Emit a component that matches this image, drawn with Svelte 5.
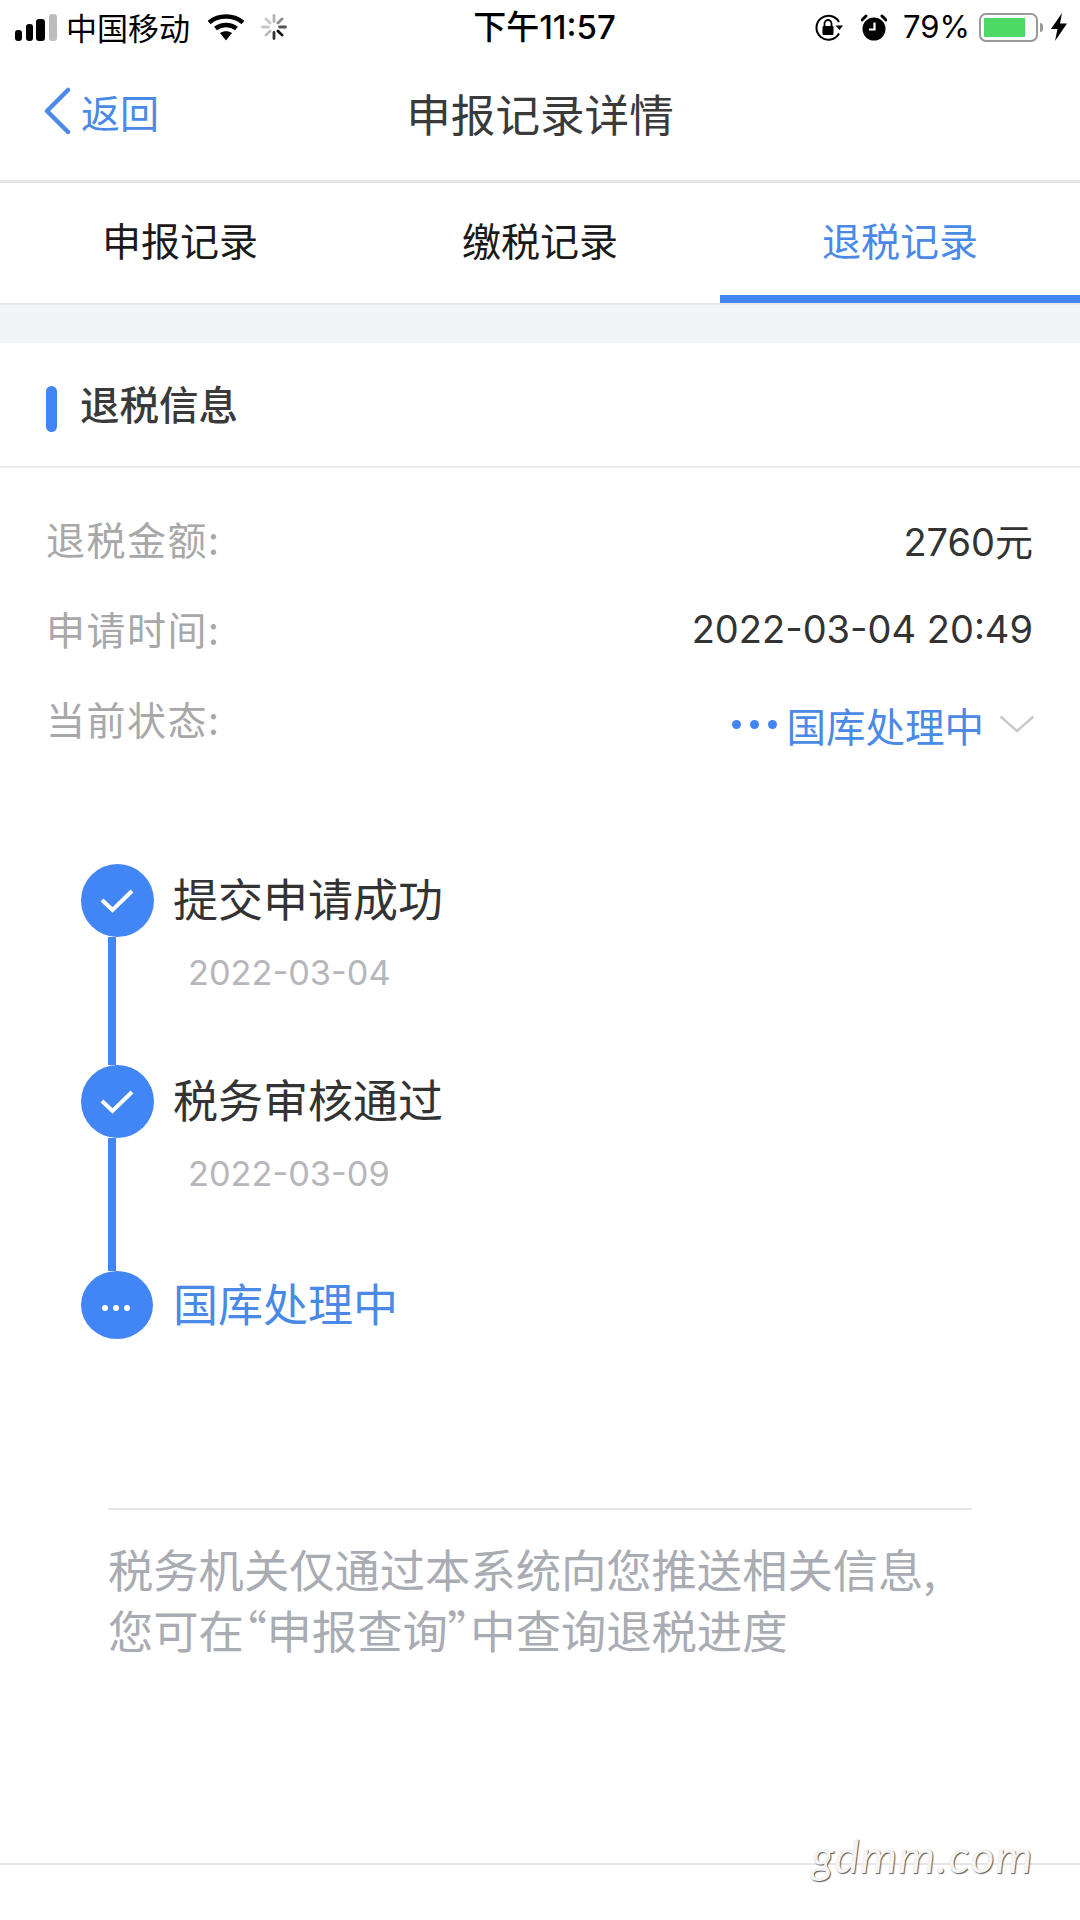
<script>
  const rows = [
    { label: '退税金额:', value: '2760元' },
    { label: '申请时间:', value: '2022-03-04 20:49' }
  ];
  const steps = [
    { title: '提交申请成功', date: '2022-03-04' },
    { title: '税务审核通过', date: '2022-03-09' }
  ];
  const spokes = [0, 45, 90, 135, 180, 225, 270, 315];
  const spokeGrey = ['#b5b5b5', '#8a8a8a', '#555', '#111', '#333', '#bbb', '#c4c4c4', '#c8c8c8'];
</script>

<div class="page">
  <header class="status">
    <div class="status-left">
      <svg class="signal" width="42" height="27" viewBox="0 0 42 27">
        <rect x="0" y="16" width="7" height="11" rx="3" fill="#000" />
        <rect x="11" y="10" width="7" height="17" rx="3" fill="#000" />
        <rect x="21" y="5" width="9" height="22" rx="3" fill="#000" />
        <rect x="34" y="0" width="8" height="27" rx="3" fill="#bdbdbd" />
      </svg>
      <span class="carrier">中国移动</span>
      <svg class="wifi" width="36" height="27" viewBox="0 0 36 27">
        <path d="M1 8.500C10.500 .5 25.500 .5 35 8.500" fill="none" stroke="#000" stroke-width="4.500" />
        <path d="M7.500 14.500C13.500 9.800 22.500 9.800 28.500 14.500" fill="none" stroke="#000" stroke-width="4.500" />
        <path d="M12 19C15.500 16.500 20.500 16.500 24 19L18 26.500Z" fill="#000" />
      </svg>
      <svg class="spinner" width="26" height="26" viewBox="0 0 26 26">
        {#each spokes as deg, i}
          <line x1="13" y1="1.500" x2="13" y2="7.500" stroke={spokeGrey[i]} stroke-width="2.800" stroke-linecap="round" transform="rotate({deg} 13 13)" />
        {/each}
      </svg>
    </div>
    <div class="time">下午11:57</div>
    <div class="status-right">
      <svg width="30" height="27" viewBox="0 0 29 27">
        <path d="M24.500 8A12 12 0 1 0 24.500 19.500" fill="none" stroke="#000" stroke-width="2" />
        <path d="M21 11.500L28.500 11.500L25 16Z" fill="#000" />
        <rect x="8" y="12" width="11" height="9" rx="1" fill="#000" />
        <path d="M10 12V9.500a3.500 3.500 0 0 1 7 0V12" fill="none" stroke="#000" stroke-width="1.800" />
      </svg>
      <svg class="alarm" width="26" height="27" viewBox="0 0 26 27">
        <circle cx="13" cy="15" r="11.500" fill="#000" />
        <path d="M1 6L5 2M25 6L21 2" stroke="#000" stroke-width="3" stroke-linecap="round" />
        <path d="M13.500 8.500V15.500H8" fill="none" stroke="#fff" stroke-width="2.200" />
      </svg>
      <span class="battery-pct">79%</span>
      <div class="battery"><div class="battery-fill"></div></div>
      <div class="battery-nib"></div>
      <svg class="bolt" width="16" height="28" viewBox="0 0 16 28">
        <path d="M11 0L0 16H6.500L4 28L16 10.500H9Z" fill="#000" />
      </svg>
    </div>
  </header>

  <nav class="nav">
    <div class="back">
      <svg width="28" height="48" viewBox="0 0 28 48">
        <path d="M25 3L4 24L25 45" fill="none" stroke="#4a8ae6" stroke-width="4.500" stroke-linecap="round" stroke-linejoin="round" />
      </svg>
      <span>返回</span>
    </div>
    <h1>申报记录详情</h1>
  </nav>

  <div class="tabs">
    <div class="tab">申报记录</div>
    <div class="tab">缴税记录</div>
    <div class="tab active">退税记录</div>
  </div>

  <div class="gap"></div>

  <div class="section-head">
    <i class="marker"></i>
    <span>退税信息</span>
  </div>

  <section class="details">
    {#each rows as row}
      <div class="row">
        <span class="label">{row.label}</span>
        <span class="value">{row.value}</span>
      </div>
    {/each}
    <div class="row">
      <span class="label">当前状态:</span>
      <span class="value status-value">
        <span class="dots"><i></i><i></i><i></i></span>
        <span class="status-text">国库处理中</span>
        <svg width="36" height="18" viewBox="0 0 36 18">
          <path d="M1.500 1.500L18 16L34.500 1.500" fill="none" stroke="#c9c9c9" stroke-width="2.500" />
        </svg>
      </span>
    </div>
  </section>

  <section class="timeline">
    {#each steps as step, i}
      <div class="step" class:second={i === 1}>
        <div class="rail">
          <div class="dot">
            <svg width="34" height="24" viewBox="0 0 34 24">
              <path d="M2 11L12.500 21L32 2" fill="none" stroke="#fff" stroke-width="4" />
            </svg>
          </div>
          <div class="connector"></div>
        </div>
        <div class="step-body">
          <div class="step-title">{step.title}</div>
          <div class="step-date">{step.date}</div>
        </div>
      </div>
    {/each}
    <div class="step last">
      <div class="rail">
        <div class="dot small">
          <span class="dots white"><i></i><i></i><i></i></span>
        </div>
      </div>
      <div class="step-body">
        <div class="step-title current">国库处理中</div>
      </div>
    </div>
  </section>

  <footer class="note">
    <p>税务机关仅通过本系统向您推送相关信息,</p>
    <p>您可在“申报查询”中查询退税进度</p>
  </footer>

  <div class="bottom-line"></div>
  <div class="watermark">gdmm.com</div>
</div>

<style>
  :global(body) {
    margin: 0;
    background: #fff;
  }

  .page {
    position: relative;
    width: 1080px;
    height: 1920px;
    overflow: hidden;
    background: #fff;
    font-family: "Noto Sans CJK SC", sans-serif;
    color: #333;
  }

  .status {
    display: grid;
    grid-template-columns: 1fr auto 1fr;
    align-items: center;
    height: 54px;
    color: #000;
  }

  .status-left {
    display: flex;
    align-items: center;
    padding-left: 15px;
  }

  .carrier {
    margin-left: 9px;
    font-size: 31px;
    line-height: 40px;
  }

  .wifi {
    margin-left: 18px;
  }

  .spinner {
    margin-left: 17px;
  }

  .time {
    font-family: "Inter", "Noto Sans CJK SC", sans-serif;
    font-size: 33px;
    font-weight: 500;
    line-height: 40px;
    padding-left: 9px;
  }

  .status-right {
    display: flex;
    align-items: center;
    justify-content: flex-end;
    padding-right: 13px;
  }

  .alarm {
    margin-left: 17px;
  }

  .battery-pct {
    margin-left: 16px;
    font-family: "Inter", sans-serif;
    font-size: 31px;
    line-height: 40px;
  }

  .battery {
    box-sizing: border-box;
    width: 59px;
    height: 29px;
    margin-left: 9px;
    padding: 3px;
    border: 2.500px solid #999;
    border-radius: 7px;
  }

  .battery-fill {
    width: 41px;
    height: 100%;
    background: #4cd964;
  }

  .battery-nib {
    width: 3px;
    height: 9px;
    margin-left: 2px;
    border-radius: 0 3px 3px 0;
    background: #999;
  }

  .bolt {
    margin-left: 8px;
  }

  .nav {
    position: relative;
    display: flex;
    align-items: center;
    justify-content: center;
    box-sizing: border-box;
    height: 129px;
    border-bottom: 3px solid #e6e6e6;
  }

  .back {
    position: absolute;
    left: 43px;
    top: 33px;
    display: flex;
    align-items: center;
    gap: 10px;
    color: #4a8ae6;
    font-size: 39px;
    line-height: 48px;
  }

  h1 {
    margin: 0 0 9px;
    font-size: 44.600px;
    font-weight: 400;
    line-height: 60px;
    color: #3a3a3a;
  }

  .tabs {
    display: grid;
    grid-template-columns: repeat(3, 1fr);
    height: 120px;
    border-bottom: 2px solid #e8e8ea;
  }

  .tab {
    display: flex;
    align-items: center;
    justify-content: center;
    box-sizing: border-box;
    padding-bottom: 9px;
    font-size: 39px;
    color: #1a1a1a;
  }

  .tab.active {
    padding-bottom: 1px;
    border-bottom: 8px solid #4285f4;
    color: #4a8ae6;
  }

  .gap {
    height: 38px;
    background: #f3f4f8;
  }

  .section-head {
    display: flex;
    align-items: center;
    gap: 23px;
    box-sizing: border-box;
    height: 125px;
    padding: 0 0 5px 46px;
    border-bottom: 2px solid #ebebeb;
    font-size: 39.500px;
    font-weight: 500;
    color: #3a3a3a;
  }

  .marker {
    display: block;
    width: 11px;
    height: 46px;
    margin-top: 14px;
    border-radius: 6px;
    background: #4285f4;
  }

  .details {
    padding: 25px 47px 0 46px;
  }

  .row {
    display: flex;
    justify-content: space-between;
    align-items: center;
    height: 90px;
  }

  .label {
    font-size: 39px;
    letter-spacing: 1.500px;
    color: #a8a8a8;
  }

  .value {
    padding-top: 2px;
    font-family: "Inter", "Noto Sans CJK SC", sans-serif;
    font-size: 38px;
    color: #333;
  }

  .status-value {
    display: flex;
    align-items: center;
    margin-right: -2px;
    padding-top: 12px;
  }

  .dots {
    display: flex;
    gap: 9px;
    margin-right: 10px;
  }

  .dots i {
    display: block;
    width: 9px;
    height: 9px;
    border-radius: 50%;
    background: #4285f4;
  }

  .status-text {
    margin-right: 15px;
    font-family: "Noto Sans CJK SC", sans-serif;
    font-size: 39.500px;
    color: #4a8ae6;
  }

  .timeline {
    margin-top: 101px;
    padding-left: 81px;
  }

  .step {
    display: flex;
  }

  .rail {
    display: flex;
    flex-direction: column;
    width: 73px;
  }

  .dot {
    display: flex;
    align-items: center;
    justify-content: center;
    flex: none;
    width: 73px;
    height: 73px;
    border-radius: 50%;
    background: #4285f4;
  }

  .dot.small {
    width: 72px;
    height: 68px;
  }

  .dot svg {
    margin-right: 2px;
  }

  .connector {
    flex: 1;
    width: 8px;
    margin-left: 27px;
    background: #4285f4;
  }

  .step-body {
    margin-left: 19px;
    padding-bottom: 68px;
  }

  .step.second .step-body {
    padding-bottom: 73px;
  }

  .step.last .step-body {
    padding-bottom: 0;
  }

  .step-title {
    font-size: 45px;
    line-height: 68px;
    color: #333;
  }

  .step-title.current {
    line-height: 63px;
    color: #4a8ae6;
  }

  .step-date {
    margin: 17px 0 0 15px;
    font-family: "Inter", sans-serif;
    font-size: 34.300px;
    line-height: 48px;
    color: #b6b6bb;
  }

  .dots.white {
    gap: 5px;
    margin: 6px 2px 0 0;
  }

  .dots.white i {
    width: 6px;
    height: 6px;
    background: #fff;
  }

  .note {
    margin: 169px 108px 0;
    padding-top: 28px;
    border-top: 2px solid #e6e6e8;
  }

  .note p {
    margin: 0;
    font-size: 45.300px;
    line-height: 61px;
    font-feature-settings: "palt";
    color: #a9acb3;
    white-space: nowrap;
  }

  .bottom-line {
    margin-top: 203px;
    height: 2px;
    background: #e6e6ea;
  }

  .watermark {
    position: absolute;
    left: 811px;
    top: 1825px;
    font-family: "Lato", sans-serif;
    font-style: italic;
    font-size: 47px;
    line-height: 60px;
    letter-spacing: 1px;
    color: #f4f4f4;
    text-shadow: 1px 1px 1px #555;
  }
</style>
